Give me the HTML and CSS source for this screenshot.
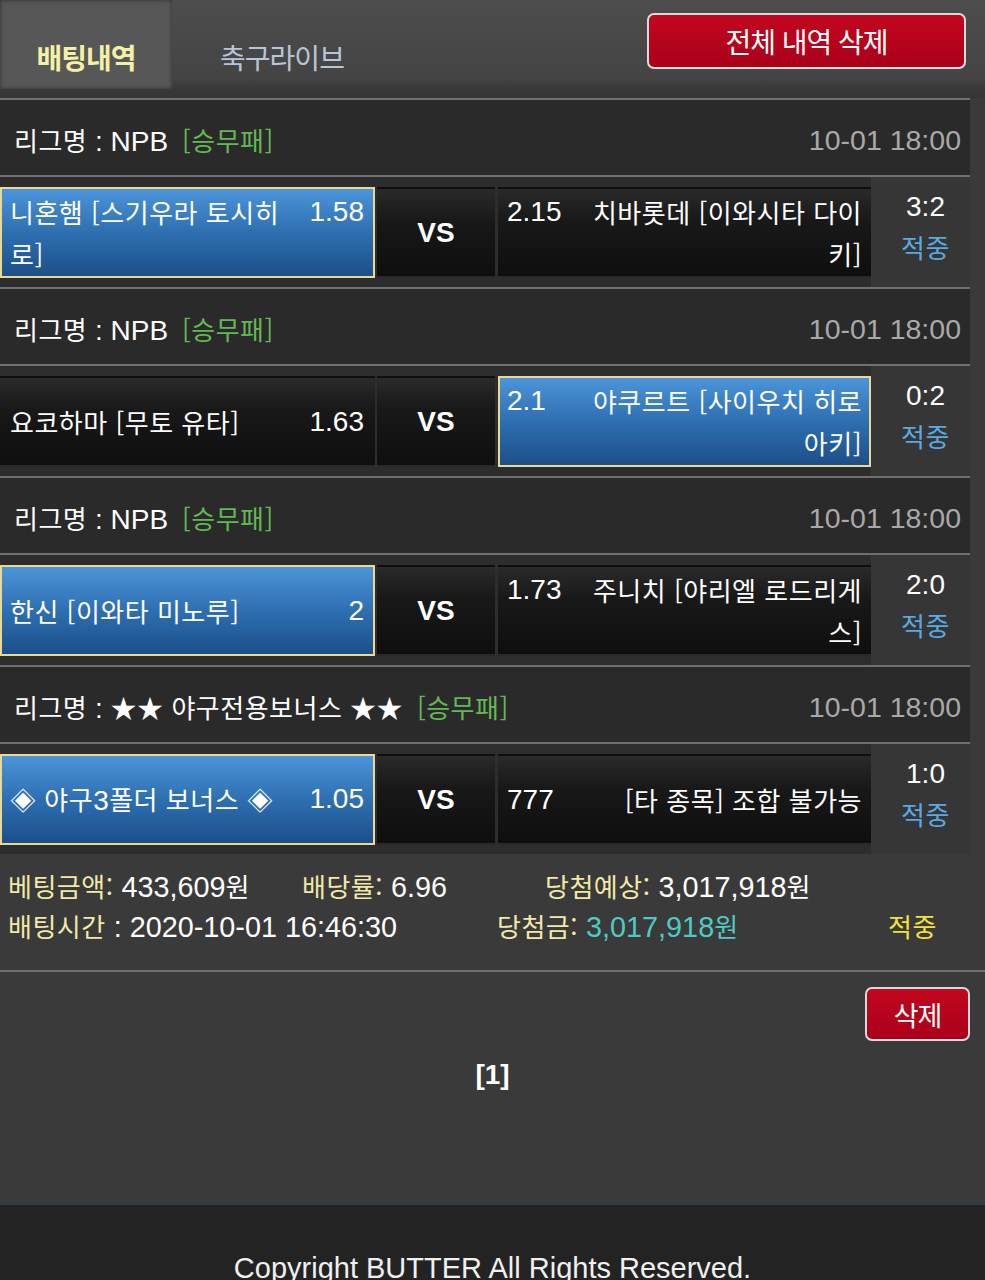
FILE: index.html
```html
<!DOCTYPE html>
<html lang="ko">
<head>
<meta charset="utf-8">
<title>배팅내역</title>
<link rel="stylesheet" href="styles.css">
</head>
<body>
<div class="page">
  <div class="top">
    <div class="tab active">배팅내역</div>
    <div class="tab">축구라이브</div>
    <button class="btn btn-all">전체 내역 삭제</button>
  </div>

  <div class="list">
    <div class="lg">
      <div class="lg-name"><span class="k">리그명</span> : NPB <span class="k type">[승무패]</span></div>
      <div class="lg-date">10-01 18:00</div>
    </div>
    <div class="match">
      <div class="cell home sel"><div class="in"><span class="name k">니혼햄 [스기우라 토시히로]</span><span class="odd">1.58</span></div></div>
      <div class="cell vs">VS</div>
      <div class="cell away"><div class="in"><span class="odd">2.15</span><span class="name k">치바롯데 [이와시타 다이키]</span></div></div>
      <div class="res"><div>3:2</div><div class="hit k">적중</div></div>
    </div>

    <div class="lg">
      <div class="lg-name"><span class="k">리그명</span> : NPB <span class="k type">[승무패]</span></div>
      <div class="lg-date">10-01 18:00</div>
    </div>
    <div class="match">
      <div class="cell home"><div class="in"><span class="name k">요코하마 [무토 유타]</span><span class="odd">1.63</span></div></div>
      <div class="cell vs">VS</div>
      <div class="cell away sel"><div class="in"><span class="odd">2.1</span><span class="name k">야쿠르트 [사이우치 히로아키]</span></div></div>
      <div class="res"><div>0:2</div><div class="hit k">적중</div></div>
    </div>

    <div class="lg">
      <div class="lg-name"><span class="k">리그명</span> : NPB <span class="k type">[승무패]</span></div>
      <div class="lg-date">10-01 18:00</div>
    </div>
    <div class="match">
      <div class="cell home sel"><div class="in"><span class="name k">한신 [이와타 미노루]</span><span class="odd">2</span></div></div>
      <div class="cell vs">VS</div>
      <div class="cell away"><div class="in"><span class="odd">1.73</span><span class="name k">주니치 [야리엘 로드리게스]</span></div></div>
      <div class="res"><div>2:0</div><div class="hit k">적중</div></div>
    </div>

    <div class="lg">
      <div class="lg-name"><span class="k">리그명</span> : <span class="k">★★ 야구전용보너스 ★★</span> <span class="k type">[승무패]</span></div>
      <div class="lg-date">10-01 18:00</div>
    </div>
    <div class="match">
      <div class="cell home sel"><div class="in"><span class="name k">◈ 야구<span class="n">3</span>폴더 보너스 ◈</span><span class="odd">1.05</span></div></div>
      <div class="cell vs">VS</div>
      <div class="cell away"><div class="in"><span class="odd">777</span><span class="name k">[타 종목] 조합 불가능</span></div></div>
      <div class="res"><div>1:0</div><div class="hit k">적중</div></div>
    </div>
  </div>

  <div class="summary">
    <div class="sum-row r1">
      <div><span class="lbl k">베팅금액:</span> 433,609<span class="k">원</span></div>
      <div><span class="lbl k">배당률:</span> 6.96</div>
      <div><span class="lbl k">당첨예상:</span> 3,017,918<span class="k">원</span></div>
    </div>
    <div class="sum-row r2">
      <div><span class="lbl k">배팅시간</span> : 2020-10-01 16:46:30</div>
      <div><span class="lbl k">당첨금:</span> <span class="win">3,017,918<span class="k">원</span></span></div>
      <div class="status k">적중</div>
    </div>
  </div>

  <div class="actions">
    <button class="btn btn-del">삭제</button>
  </div>
  <div class="pager">[1]</div>
</div>
<div class="footer">Copyright BUTTER All Rights Reserved.</div>
</body>
</html>
```

FILE: styles.css
```css
* {
  box-sizing: border-box;
  margin: 0;
  padding: 0;
}

body {
  width: 985px;
  height: 1280px;
  overflow: hidden;
  background: #3a3a3a;
  color: #fff;
  font-family: "Liberation Sans", "Noto Sans CJK KR", sans-serif;
  font-size: 28px;
}

.k {
  font-family: "Noto Sans CJK KR", "Liberation Sans", sans-serif;
  font-size: 26px;
  letter-spacing: 0.5px;
}

.k .n {
  font-family: "Liberation Sans", sans-serif;
  font-size: 28px;
}

.page {
  min-height: 1203px;
}

/* top bar */
.top {
  display: flex;
  align-items: flex-start;
  height: 98px;
  background: linear-gradient(#4d4d4d, #444 80%, #383838 91%, #363636);
}

.tab {
  height: 89px;
  display: flex;
  align-items: center;
  justify-content: center;
  padding-top: 24px;
  font-family: "Noto Sans CJK KR", sans-serif;
  font-size: 28px;
  letter-spacing: -1px;
  line-height: 40px;
}

.tab.active {
  width: 172px;
  background: #575757;
  box-shadow: inset 0 0 4px #2f2f2f;
  color: #f4f0a8;
  font-weight: bold;
}

.tab:not(.active) {
  width: 220px;
  color: #bac4d8;
}

.btn {
  font-family: "Noto Sans CJK KR", sans-serif;
  color: #fff;
  border: 2px solid #dcdcdc;
  border-radius: 7px;
  background: linear-gradient(#c2071f, #ab001a);
  letter-spacing: -1px;
}

.btn-all {
  margin: 13px 19px 0 auto;
  width: 319px;
  height: 56px;
  font-size: 28px;
}

/* list */
.list {
  width: 970px;
}

.lg {
  display: flex;
  align-items: center;
  justify-content: space-between;
  height: 77px;
  border-top: 2px solid #707070;
  background: #2a2a2a;
  padding: 5px 9px 0 14px;
  line-height: 40px;
}

.lg-name,
.lg-date {
  height: 40px;
}

.lg .type {
  color: #63b855;
  margin-left: 6px;
}

.lg-date {
  color: #a9a9a9;
  font-size: 28.5px;
}

.match {
  display: flex;
  height: 112px;
  border-top: 2px solid #707070;
  background: #2d2d2d;
}

.cell {
  display: flex;
  align-items: center;
  margin: 10px 0 9px;
  border: 2px solid transparent;
  background: linear-gradient(#2a2a2a, #191919 35%, #0e0e0e);
  line-height: 42px;
}

.cell.sel {
  border-color: #ead98f;
  background: linear-gradient(#4c94d9, #2e6fb1 50%, #1c4f89);
}

.in {
  display: flex;
  align-items: flex-start;
  width: 100%;
}

.home {
  width: 375px;
  padding: 0 9px 0 8px;
}

.home .name {
  flex: 1;
}

.home .odd {
  margin-left: 16px;
  text-align: right;
}

.vs {
  width: 118px;
  margin-left: 2px;
  justify-content: center;
  font-weight: bold;
  font-size: 28px;
}

.away {
  width: 373px;
  margin-left: 3px;
  padding: 0 7px 0 7px;
}

.away .odd {
  flex: none;
  width: 81px;
}

.away .name {
  flex: 1;
  text-align: right;
}

.res {
  width: 99px;
  background: #363636;
  text-align: center;
  padding: 10px 0 0 10px;
  line-height: 40px;
}

.res > div {
  height: 40px;
}

.hit {
  display: block;
  color: #5aa9e2;
}

/* summary */
.summary {
  width: 985px;
  height: 118px;
  padding: 12px 0 0 8px;
  border-bottom: 2px solid #717171;
  line-height: 40px;
  font-size: 28.8px;
}

.sum-row {
  display: grid;
  height: 40px;
}

.sum-row.r1 {
  grid-template-columns: 294px 243px auto;
}

.sum-row.r2 {
  grid-template-columns: 489px 391px auto;
}

.lbl {
  color: #f1e9a8;
}

.win {
  color: #4fcac1;
}

.status {
  color: #f2e23e;
}

.actions {
  display: flex;
  justify-content: flex-end;
  padding: 15px 15px 0 0;
}

.btn-del {
  width: 105px;
  height: 54px;
  font-size: 27px;
}

.pager {
  margin-top: 14px;
  text-align: center;
  font-weight: bold;
  line-height: 40px;
}

/* footer */
.footer {
  height: 77px;
  border-top: 2px solid #2e3a50;
  background: #232323;
  padding-top: 48px;
  text-align: center;
  font-size: 29px;
  line-height: 30px;
  color: #f0f0f0;
}
```
